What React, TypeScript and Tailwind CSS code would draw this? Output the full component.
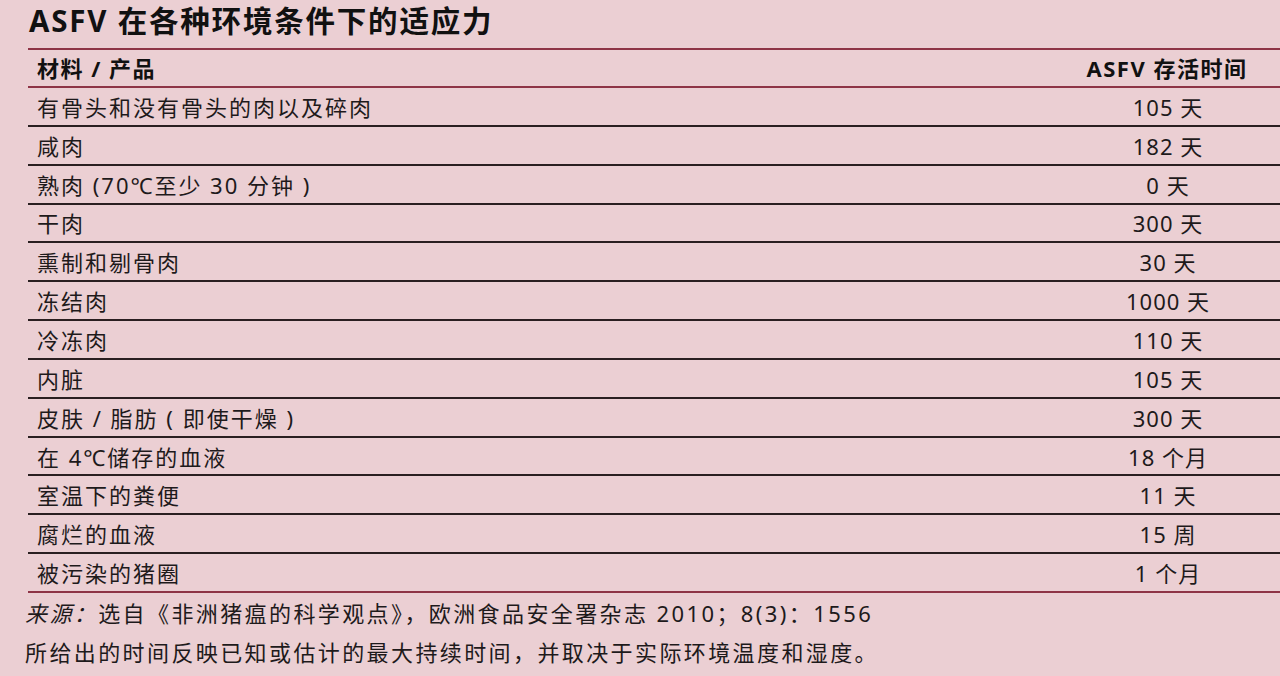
import React from "react";

const rows: [string, string][] = [
  ["有骨头和没有骨头的肉以及碎肉", "105 天"],
  ["咸肉", "182 天"],
  ["熟肉 (70℃至少 30 分钟 )", "0 天"],
  ["干肉", "300 天"],
  ["熏制和剔骨肉", "30 天"],
  ["冻结肉", "1000 天"],
  ["冷冻肉", "110 天"],
  ["内脏", "105 天"],
  ["皮肤 / 脂肪 ( 即使干燥 )", "300 天"],
  ["在 4℃储存的血液", "18 个月"],
  ["室温下的粪便", "11 天"],
  ["腐烂的血液", "15 周"],
  ["被污染的猪圈", "1 个月"],
];

export default function App() {
  return (
    <div
      className="w-[1280px] h-[676px] overflow-hidden bg-[#ebcfd3] text-[#1e1a1b]"
      style={{ fontFamily: '"Noto Sans", "Noto Sans CJK SC", sans-serif' }}
    >
      <div className="h-[48px] pl-[29px] flex items-center">
        <h1 className="text-[29.5px] font-bold leading-none tracking-[1.8px] text-[#111] -mt-[6px]">
          ASFV 在各种环境条件下的适应力
        </h1>
      </div>
      <div className="ml-[28px]">
        <div className="border-t-2 border-b-2 border-[#8e3446] h-[40px] flex items-center">
          <div className="flex-1 pl-[9px] text-[22px] font-bold tracking-[1.5px] text-[#111]">材料 / 产品</div>
          <div className="w-[224px] text-center text-[22px] font-bold tracking-[1.5px] text-[#111] pr-[2px]">ASFV 存活时间</div>
        </div>
        {rows.map(([a, b], i) => (
          <div
            key={i}
            className={
              "h-[38.85px] flex items-center border-b-2 " +
              (i === rows.length - 1 ? "border-[#8e3446]" : "border-[#2a1f20]")
            }
          >
            <div className="flex-1 pl-[9px] text-[22px] tracking-[2px] leading-none pt-[1px]">{a}</div>
            <div className="w-[224px] text-center text-[22px] tracking-[1px] leading-none pt-[1px]">{b}</div>
          </div>
        ))}
      </div>
      <div className="pl-[25px] pt-[1px] text-[22px] tracking-[2.4px] leading-[39px] text-[#1e1a1b]">
        <div>
          <span className="italic">来源：</span>选自《非洲猪瘟的科学观点》，欧洲食品安全署杂志 2010；8(3)：1556
        </div>
        <div>所给出的时间反映已知或估计的最大持续时间，并取决于实际环境温度和湿度。</div>
      </div>
    </div>
  );
}
